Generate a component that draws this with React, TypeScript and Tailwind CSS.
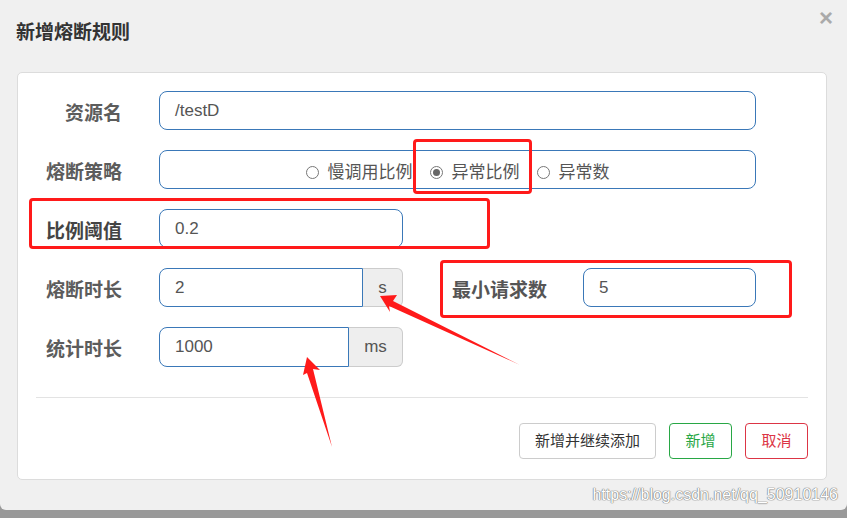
const font = { fontFamily: '"Liberation Sans", "Noto Sans CJK SC", sans-serif' };

const Label = ({ text, dark }: { text: string; dark?: boolean }) => (
  <div
    className={`w-[104px] shrink-0 pt-[6px] text-right text-[19px] font-bold leading-none ${
      dark ? 'text-[#444]' : 'text-[#5c5c5c]'
    }`}
  >
    {text}
  </div>
);

const Radio = ({ text, checked }: { text: string; checked?: boolean }) => (
  <label className="flex items-center gap-[9px]">
    <span className="flex h-[13px] w-[13px] items-center justify-center rounded-full border border-[#777] bg-white">
      {checked && <span className="h-[7px] w-[7px] rounded-full bg-[#666]" />}
    </span>
    <span>{text}</span>
  </label>
);

const Arrows = () => (
  <svg className="pointer-events-none absolute left-0 top-0" width="847" height="518">
    <polygon points="380,296 397,295 393,301 520,365 389,306 390,312" fill="#ff1a1a" />
    <polygon points="307,357 320,370 313,369 332,447 307,373 303,375" fill="#ff1a1a" />
  </svg>
);

export default function App() {
  return (
    <div className="relative h-[518px] w-[847px] overflow-hidden bg-[#999]" style={font}>
      <div className="flex h-[510px] flex-col rounded-b-[6px] bg-[#f0f0f0]">
        <div className="flex h-[72px] justify-between pl-[16px] pr-[14px]">
          <h1 className="pt-[23px] text-[19px] font-bold leading-none text-[#333]">新增熔断规则</h1>
          <span className="pt-[6px] text-[24px] font-bold leading-none text-[#aaa]">×</span>
        </div>
        <div className="ml-[17px] mr-[20px] h-[408px] rounded-[5px] border border-[#dcdcdc] bg-white">
          <div className="flex flex-col gap-[20px] pt-[18px] text-[17px] text-[#555]">
            <div className="flex h-[39px] items-center gap-[37px]">
              <Label text="资源名" />
              <div className="flex h-full w-[597px] items-center rounded-[8px] border border-[#3a78b8] px-[15px]">/testD</div>
            </div>
            <div className="flex h-[39px] items-center gap-[37px]">
              <Label text="熔断策略" />
              <div className="flex h-full w-[597px] items-center justify-center gap-[17px] rounded-[8px] border border-[#3a78b8] pt-[6px] text-[#555]">
                <Radio text="慢调用比例" />
                <Radio text="异常比例" checked />
                <Radio text="异常数" />
              </div>
            </div>
            <div className="flex h-[39px] items-center gap-[37px]">
              <Label text="比例阈值" dark />
              <div className="flex h-full w-[244px] items-center rounded-[8px] border border-[#3a78b8] px-[15px]">0.2</div>
            </div>
            <div className="flex h-[39px] items-center">
              <Label text="熔断时长" />
              <div className="ml-[37px] flex h-full w-[244px]">
                <div className="flex flex-1 items-center rounded-l-[8px] border border-[#3a78b8] px-[15px]">2</div>
                <div className="flex w-[40px] items-center justify-center rounded-r-[6px] border border-l-0 border-[#ccc] bg-[#eee]">s</div>
              </div>
              <div className="ml-[49px] w-[95px] pt-[6px] text-[19px] font-bold leading-none text-[#555]">最小请求数</div>
              <div className="ml-[36px] flex h-full w-[173px] items-center rounded-[8px] border border-[#3a78b8] px-[15px]">5</div>
            </div>
            <div className="flex h-[39px] items-center gap-[37px]">
              <Label text="统计时长" />
              <div className="flex h-[40px] w-[244px]">
                <div className="flex flex-1 items-center rounded-l-[8px] border border-[#3a78b8] px-[15px]">1000</div>
                <div className="flex w-[54px] items-center justify-center rounded-r-[6px] border border-l-0 border-[#ccc] bg-[#eee]">ms</div>
              </div>
            </div>
          </div>
          <div className="mx-[18px] mt-[31px] border-t border-[#e3e3e3]" />
          <div className="flex justify-end gap-[13px] pr-[18px] pt-[25px] text-[15px]">
            <button className="h-[36px] w-[137px] rounded-[4px] border border-[#ccc] text-[#333]">新增并继续添加</button>
            <button className="h-[36px] w-[63px] rounded-[4px] border border-[#28a745] text-[#28a745]">新增</button>
            <button className="h-[36px] w-[63px] rounded-[4px] border border-[#dc3545] text-[#dc3545]">取消</button>
          </div>
        </div>
        <div className="flex flex-1 items-center justify-end pr-[9px] text-[16px] text-white [text-shadow:0_0_1px_#777,0_0_1px_#777,0_0_1px_#777]">
          https://blog.csdn.net/qq_50910146
        </div>
      </div>

      <div className="pointer-events-none absolute left-[413px] top-[139px] h-[55px] w-[119px] rounded-[4px] border-[3px] border-[#ff1a1a]" />
      <div className="pointer-events-none absolute left-[29px] top-[198px] h-[51px] w-[461px] rounded-[4px] border-[3px] border-[#ff1a1a]" />
      <div className="pointer-events-none absolute left-[440px] top-[260px] h-[58px] w-[352px] rounded-[4px] border-[3px] border-[#ff1a1a]" />
      <Arrows />
    </div>
  );
}
